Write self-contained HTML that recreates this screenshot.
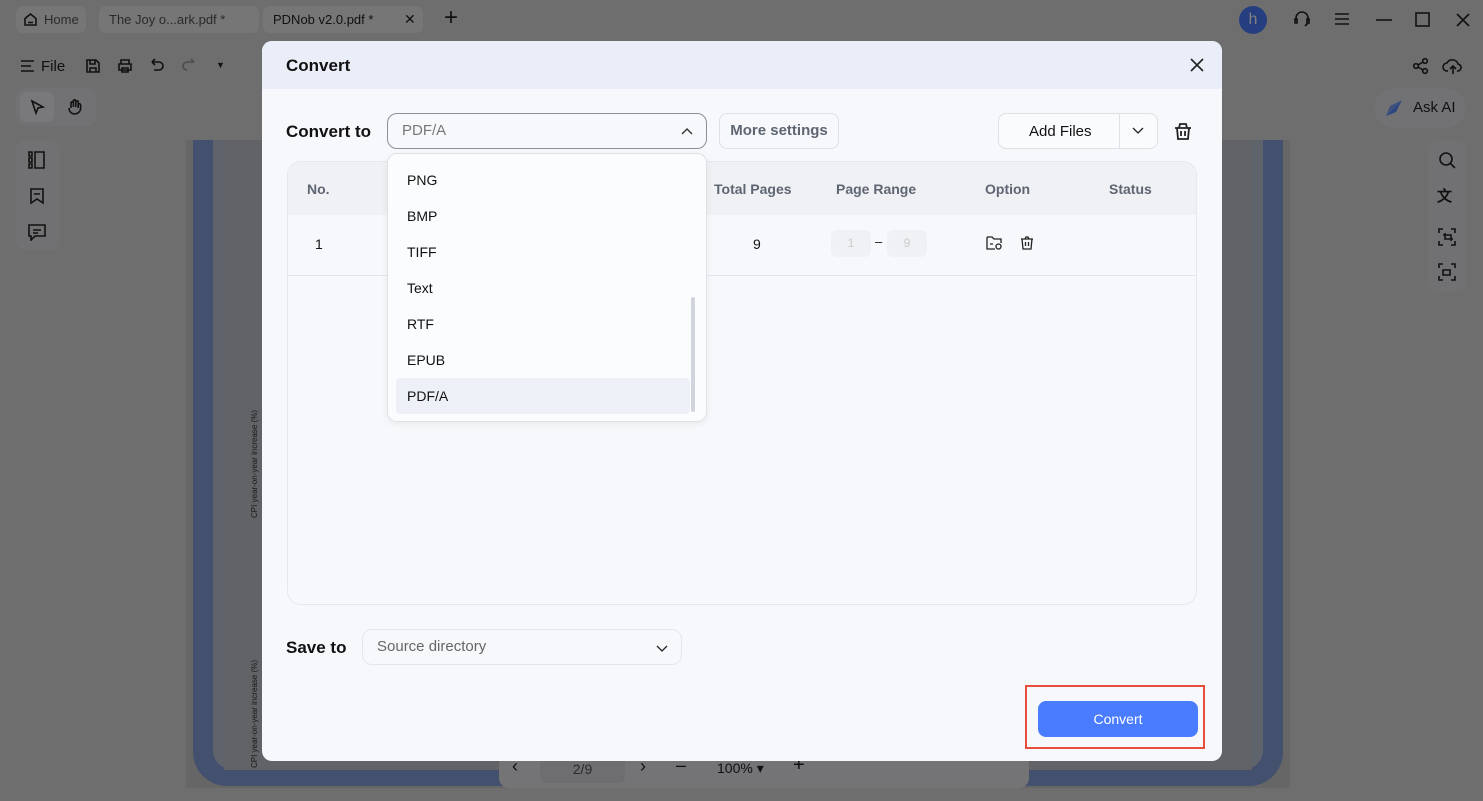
<!DOCTYPE html>
<html><head><meta charset="utf-8"><style>
*{box-sizing:border-box;margin:0;padding:0}
html,body{background:#dcdcdc}
body{width:1483px;height:801px;overflow:hidden;font-family:"Liberation Sans",sans-serif;position:relative;color:#111}
.a{position:absolute}
.tab{position:absolute;top:6px;height:27px;border-radius:7px;background:#ececec;color:#555;font-size:13px;line-height:27px;padding-left:10px}
.ic{position:absolute;stroke:#222;fill:none;stroke-width:1.6}
.dlg{position:absolute;left:262px;top:41px;width:960px;height:720px;background:#f7f8fb;border-radius:10px;overflow:hidden}
.hd{height:48px;background:#eaeef8;font-weight:bold;font-size:17px;padding:15px 0 0 24px}
.th{position:absolute;top:181px;font-size:14px;font-weight:bold;color:#5e6573}
.li{position:absolute;left:407px;font-size:14px;color:#111}
</style></head><body>
<div class="a" style="left:0;top:0;width:1483px;height:801px;background:#dcdcdc"></div>
<!-- top tabs -->
<div class="tab" style="left:16px;width:70px;padding-left:28px">Home</div>
<svg class="ic" style="left:23px;top:12px" width="15" height="15" viewBox="0 0 15 15"><path d="M2 6.5L7.5 2 13 6.5V13H2z M5 10.5h5"/></svg>
<div class="tab" style="left:99px;width:160px">The Joy o...ark.pdf *</div>
<div class="tab" style="left:263px;width:160px;color:#222">PDNob v2.0.pdf *</div>
<div class="a" style="left:404px;top:11px;font-size:14px;color:#222">✕</div>
<div class="a" style="left:444px;top:4px;font-size:24px;color:#222;font-weight:300">+</div>
<div class="a" style="left:1239px;top:6px;width:28px;height:28px;border-radius:50%;background:#4a7cff;color:#fff;text-align:center;line-height:27px;font-size:16px">h</div>
<svg class="ic" style="left:1292px;top:9px" width="20" height="20" viewBox="0 0 20 20"><path d="M4 12V9a6 6 0 0112 0v3M3 10h2v4H3zM15 10h2v4h-2zM16 14l-3 3"/></svg>
<svg class="ic" style="left:1334px;top:12px" width="16" height="14"><path d="M1 2h14M1 7h14M1 12h14"/></svg>
<svg class="ic" style="left:1376px;top:19px" width="16" height="2"><path d="M0 1h16"/></svg>
<svg class="ic" style="left:1415px;top:12px" width="16" height="16"><rect x="1" y="1" width="13" height="13"/></svg>
<svg class="ic" style="left:1456px;top:13px" width="14" height="14"><path d="M1 1l12 12M13 1L1 13"/></svg>
<!-- toolbar -->
<svg class="ic" style="left:20px;top:59px" width="16" height="14"><path d="M1 2h13M1 7h10M1 12h13"/></svg>
<div class="a" style="left:41px;top:58px;font-size:15px;color:#222">File</div>
<svg class="ic" style="left:85px;top:58px" width="16" height="16"><path d="M2 2h9l3 3v9H2zM5 2v4h5V2M5 14v-4h6v4"/></svg>
<svg class="ic" style="left:117px;top:58px" width="16" height="16"><path d="M4 6V2h8v4M2 6h12v6H2zM5 10h6v4H5z"/></svg>
<svg class="ic" style="left:149px;top:58px" width="16" height="16"><path d="M3 4h7a4 4 0 010 8H5M3 4l3-3M3 4l3 3"/></svg>
<svg class="ic" style="left:181px;top:58px;stroke:#999" width="16" height="16"><path d="M13 4H6a4 4 0 000 8M13 4l-3-3"/></svg>
<div class="a" style="left:216px;top:60px;font-size:9px;color:#222">▼</div>
<div class="a" style="left:16px;top:88px;width:80px;height:38px;border-radius:10px;background:#e4e5ea"></div>
<div class="a" style="left:20px;top:92px;width:34px;height:30px;border-radius:7px;background:#f2f3f6"></div>
<svg class="ic" style="left:30px;top:99px" width="16" height="18"><path d="M2 2l11 6-5 1-2 5z"/></svg>
<svg class="ic" style="left:66px;top:98px" width="18" height="18"><path d="M5 10V5a1.2 1.2 0 012.4 0V9V3a1.2 1.2 0 012.4 0V9V4a1.2 1.2 0 012.4 0v6V7a1.2 1.2 0 012.4 0v4a6 6 0 01-11 2L3 10"/></svg>
<div class="a" style="left:16px;top:140px;width:44px;height:110px;border-radius:10px;background:#e2e3e7"></div>
<svg class="ic" style="left:27px;top:150px" width="20" height="20"><path d="M2 2h3v4H2zM2 8h3v4H2zM2 14h3v4H2zM8 2h9v16H8z"/></svg>
<svg class="ic" style="left:29px;top:187px" width="16" height="18"><path d="M2 2h12v14l-6-4-6 4zM5 7h6"/></svg>
<svg class="ic" style="left:27px;top:223px" width="20" height="18"><path d="M2 2h16v11H8l-4 4v-4H2zM6 7h8M6 10h5"/></svg>
<!-- right toolbar -->
<svg class="ic" style="left:1412px;top:57px" width="18" height="18"><circle cx="13" cy="4" r="2.3"/><circle cx="4" cy="9" r="2.3"/><circle cx="13" cy="14" r="2.3"/><path d="M6 8l5-3M6 10l5 3"/></svg>
<svg class="ic" style="left:1442px;top:56px" width="22" height="20"><path d="M6 15H5a4 4 0 010-8 6 6 0 0111 1 3.5 3.5 0 01-1 7M11 18v-8M8 13l3-3 3 3"/></svg>
<div class="a" style="left:1374px;top:88px;width:92px;height:40px;border-radius:20px;background:#e4e5ea"></div>
<svg class="a" style="left:1384px;top:98px" width="20" height="20"><path d="M2 18L18 2 12 14z" fill="#5a8aff"/><path d="M2 18L18 2 6 8z" fill="#7aa0ff"/></svg>
<div class="a" style="left:1413px;top:99px;font-size:15px;color:#222">Ask AI</div>
<div class="a" style="left:1428px;top:140px;width:38px;height:152px;border-radius:10px;background:#e2e3e7"></div>
<svg class="ic" style="left:1438px;top:151px" width="18" height="18"><circle cx="8" cy="8" r="6"/><path d="M12.5 12.5L17 17"/></svg>
<div class="a" style="left:1437px;top:185px;font-size:15px;color:#222;font-weight:bold">文</div>
<svg class="ic" style="left:1437px;top:227px" width="20" height="20"><path d="M2 6V2h4M14 2h4v4M18 14v4h-4M6 18H2v-4M6 8h8v6M8 6v6h8"/></svg>
<svg class="ic" style="left:1437px;top:262px" width="20" height="20"><path d="M2 6V2h4M14 2h4v4M18 14v4h-4M6 18H2v-4M6 8h7v5H6z"/></svg>
<!-- pdf viewer -->
<div class="a" style="left:186px;top:140px;width:1104px;height:648px;background:#cccccc"></div>
<div class="a" style="left:193px;top:140px;width:1090px;height:646px;background:#86a0dc;border-radius:0 0 34px 34px"></div>
<div class="a" style="left:213px;top:140px;width:1050px;height:630px;background:#bec6d6;border-radius:0 0 20px 20px"></div>
<div class="a" style="left:224px;top:140px;width:1028px;height:630px;background:#c2c6ce"></div>
<div class="a" style="left:250px;font-size:8px;color:#333;transform:rotate(-90deg);transform-origin:left top;top:518px;white-space:nowrap">CPI year-on-year increase (%)</div>
<div class="a" style="left:250px;font-size:8px;color:#333;transform:rotate(-90deg);transform-origin:left top;top:768px;white-space:nowrap">CPI year-on-year increase (%)</div>
<div class="a" style="left:499px;top:752px;width:530px;height:36px;border-radius:0 0 10px 10px;background:#e8e9ee"></div>
<div class="a" style="left:540px;top:755px;width:85px;height:28px;border-radius:6px;background:#dcdde2;color:#555;font-size:14px;text-align:center;line-height:28px">2/9</div>
<div class="a" style="left:512px;top:756px;font-size:18px;color:#222">‹</div>
<div class="a" style="left:640px;top:756px;font-size:18px;color:#222">›</div>
<div class="a" style="left:676px;top:755px;font-size:18px;color:#222">–</div>
<div class="a" style="left:717px;top:760px;font-size:14px;color:#222">100% ▾</div>
<div class="a" style="left:793px;top:754px;font-size:20px;color:#222">+</div>
<!-- overlay -->
<div class="a" style="left:0;top:0;width:1483px;height:801px;background:rgba(0,0,0,0.5)"></div>
<!-- dialog -->
<div class="dlg">
<div class="hd">Convert</div>
<svg class="ic" style="left:928px;top:17px" width="14" height="14"><path d="M1 1l12 12M13 1L1 13"/></svg>
<div class="a" style="left:24px;top:81px;font-size:17px;font-weight:bold">Convert to</div>
<div class="a" style="left:125px;top:72px;width:320px;height:36px;border:1px solid #8a8f9a;border-radius:10px;background:#f7f8fb"></div>
<div class="a" style="left:140px;top:81px;font-size:15px;color:#777">PDF/A</div>
<svg class="ic" style="left:419px;top:86px;stroke:#333;stroke-width:1.4" width="12" height="8"><path d="M1 7l5-5 5 5"/></svg>
<div class="a" style="left:457px;top:72px;width:120px;height:36px;border:1px solid #dde0e6;border-radius:8px;font-size:15px;font-weight:bold;color:#5e6573;text-align:center;line-height:34px">More settings</div>
<div class="a" style="left:736px;top:72px;width:160px;height:36px;border:1px solid #dde0e6;border-radius:8px;background:#fafbfd"></div>
<div class="a" style="left:857px;top:72px;width:1px;height:36px;background:#dde0e6"></div>
<div class="a" style="left:767px;top:82px;font-size:15px">Add Files</div>
<svg class="ic" style="left:870px;top:86px;stroke-width:1.3" width="12" height="8"><path d="M1 1l5 5 5-5"/></svg>
<svg class="ic" style="left:910px;top:79px;stroke-width:1.8" width="22" height="22"><path d="M3 8h16M7 8l1-4h6l1 4M5 8l1 11h10l1-11M9 11v5M13 11v5"/></svg>
<div class="a" style="left:25px;top:120px;width:910px;height:444px;border:1px solid #e6e8ee;border-radius:14px;background:#f7f8fb;overflow:hidden">
 <div style="height:53px;background:#f0f1f4"></div>
 <div style="height:61px;border-bottom:1px solid #e3e6ee"></div>
</div>
</div>
<div class="th" style="left:307px">No.</div>
<div class="th" style="left:714px">Total Pages</div>
<div class="th" style="left:836px">Page Range</div>
<div class="th" style="left:985px">Option</div>
<div class="th" style="left:1109px">Status</div>
<div class="a" style="left:315px;top:236px;font-size:14px">1</div>
<div class="a" style="left:753px;top:236px;font-size:14px">9</div>
<div class="a" style="left:831px;top:230px;width:40px;height:27px;border-radius:6px;background:#f0f1f4;color:#ccc;font-size:12px;text-align:center;line-height:27px">1</div>
<div class="a" style="left:875px;top:234px;font-size:13px">–</div>
<div class="a" style="left:887px;top:230px;width:40px;height:27px;border-radius:6px;background:#f0f1f4;color:#ccc;font-size:12px;text-align:center;line-height:27px">9</div>
<svg class="ic" style="left:986px;top:235px;stroke-width:1.3" width="18" height="16"><path d="M1 2h5l2 2h7v4M1 2v12h8M4 9h3"/><circle cx="12.5" cy="11.5" r="2.5"/></svg>
<svg class="ic" style="left:1019px;top:235px;stroke-width:1.3" width="16" height="16"><path d="M2 4h12M6 4l1-2h2l1 2M3 4l1 10h8l1-10M6.5 7v4M9.5 7v4"/></svg>
<!-- dropdown list -->
<div class="a" style="left:387px;top:153px;width:320px;height:269px;background:#fbfcfe;border:1px solid #dfe2e8;border-radius:10px;box-shadow:0 2px 8px rgba(0,0,0,.06)"></div>
<div class="a" style="left:396px;top:378px;width:294px;height:36px;background:#edf0f6;border-radius:4px"></div>
<div class="a" style="left:691px;top:297px;width:4px;height:115px;border-radius:2px;background:#cfd4dd"></div>
<div class="li" style="top:172px">PNG</div>
<div class="li" style="top:208px">BMP</div>
<div class="li" style="top:244px">TIFF</div>
<div class="li" style="top:280px">Text</div>
<div class="li" style="top:316px">RTF</div>
<div class="li" style="top:352px">EPUB</div>
<div class="li" style="top:388px">PDF/A</div>
<!-- save to -->
<div class="a" style="left:286px;top:638px;font-size:17px;font-weight:bold">Save to</div>
<div class="a" style="left:362px;top:629px;width:320px;height:36px;border:1px solid #e3e6ec;border-radius:10px"></div>
<div class="a" style="left:377px;top:638px;font-size:15px;color:#666">Source directory</div>
<svg class="ic" style="left:656px;top:645px;stroke-width:1.3" width="12" height="8"><path d="M1 1l5 5 5-5"/></svg>
<div class="a" style="left:1025px;top:685px;width:180px;height:64px;border:2px solid #e74c3c"></div>
<div class="a" style="left:1038px;top:701px;width:160px;height:36px;border-radius:8px;background:#4a7cff;color:#fff;font-size:14px;text-align:center;line-height:36px">Convert</div>
</body></html>
